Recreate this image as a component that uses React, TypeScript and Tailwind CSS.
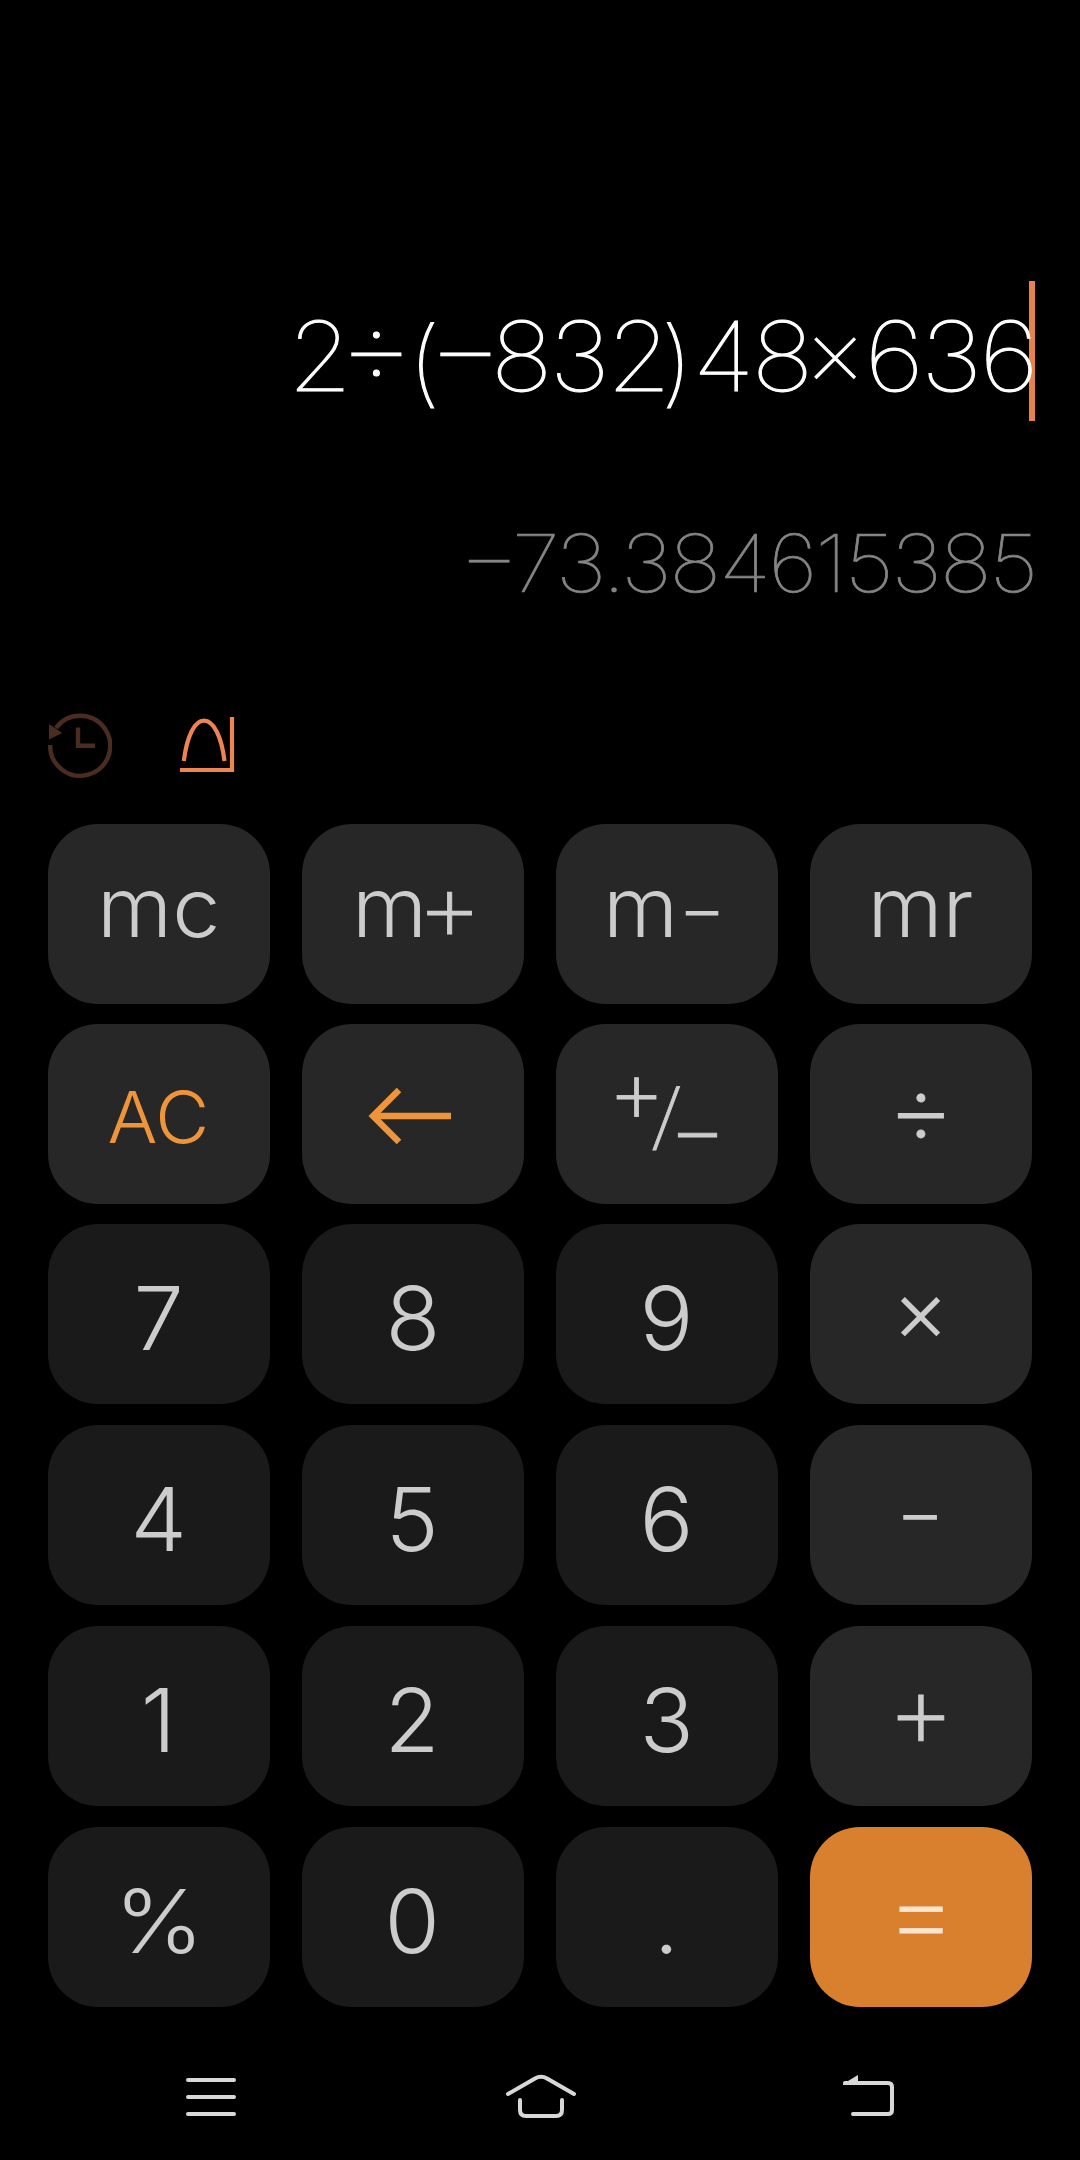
import React from 'react'
import clsx from 'clsx'

interface KeyItem {
    id: string;
    label: React.ReactNode;
    tone: 'digit' | 'operator' | 'accent';
    textClass: string;
}

const digitText = 'pt-[7px] pr-px text-[88px] font-light scale-x-[1.02]';
const memoryText = 'pb-3 text-[82px] font-light scale-x-[1.05]';
const mathText = 'pb-3 text-[106px] font-extralight [-webkit-text-stroke:0.8px_currentColor]';

const ArrowIcon = () => (
    <svg width="84" height="58" viewBox="0 0 84 58" fill="none" stroke="#ee943a" strokeWidth="6.400">
        <path d="M83 29H4" />
        <path d="M31 3L5 29L31 55" />
    </svg>
)

const MemoryPlus = () => (
    <span className="flex items-center">
        m<span className="-ml-2.5 -mr-2 pb-[5px] text-[97px] font-extralight leading-[82px] [-webkit-text-stroke:0.8px_currentColor]">+</span>
    </span>
)

const MemoryMinus = () => (
    <span className="flex items-center">
        m<span className="mr-1 text-[70px] leading-[82px]">−</span>
    </span>
)

const PlusMinus = () => (
    <span className="flex items-center text-[90px] font-extralight [-webkit-text-stroke:0.8px_currentColor]">
        <span className="mb-[46px] flex w-[41px] justify-center">+</span>
        <span className="-ml-1 mt-0.5 flex w-[27px] -skew-x-6 justify-center text-[73px]">/</span>
        <span className="-ml-[3px] mt-[29px] flex w-[41px] justify-center">−</span>
    </span>
)

const keys: KeyItem[] = [
    { id: 'mc', label: 'mc', tone: 'operator', textClass: memoryText },
    { id: 'm-plus', label: <MemoryPlus />, tone: 'operator', textClass: memoryText },
    { id: 'm-minus', label: <MemoryMinus />, tone: 'operator', textClass: memoryText },
    { id: 'mr', label: 'mr', tone: 'operator', textClass: memoryText },
    { id: 'clear', label: 'AC', tone: 'operator', textClass: 'pt-1.5 pr-0.5 text-[72px] font-light text-[#ee943a] scale-x-[1.03]' },
    { id: 'back', label: <ArrowIcon />, tone: 'operator', textClass: 'pr-1.5 pt-[3px]' },
    { id: 'sign', label: <PlusMinus />, tone: 'operator', textClass: '' },
    { id: 'divide', label: '÷', tone: 'operator', textClass: mathText },
    { id: '7', label: '7', tone: 'digit', textClass: digitText },
    { id: '8', label: '8', tone: 'digit', textClass: digitText },
    { id: '9', label: '9', tone: 'digit', textClass: digitText },
    { id: 'multiply', label: '×', tone: 'operator', textClass: 'pb-2 pr-px text-[88px] font-light' },
    { id: '4', label: '4', tone: 'digit', textClass: digitText },
    { id: '5', label: '5', tone: 'digit', textClass: digitText },
    { id: '6', label: '6', tone: 'digit', textClass: digitText },
    { id: 'subtract', label: '−', tone: 'operator', textClass: 'pb-2 pr-0.5 text-[76px] font-light' },
    { id: '1', label: '1', tone: 'digit', textClass: digitText },
    { id: '2', label: '2', tone: 'digit', textClass: digitText },
    { id: '3', label: '3', tone: 'digit', textClass: digitText },
    { id: 'add', label: '+', tone: 'operator', textClass: mathText },
    { id: 'percent', label: '%', tone: 'digit', textClass: 'pt-[7px] text-[88px] font-light scale-x-[1.09]' },
    { id: '0', label: '0', tone: 'digit', textClass: digitText },
    { id: 'point', label: '.', tone: 'digit', textClass: digitText },
    { id: 'equals', label: '=', tone: 'accent', textClass: 'pb-3 text-[109px] font-extralight scale-x-[1.04] [-webkit-text-stroke:0.8px_currentColor]' },
];

// widths and gaps of the parts of the typed expression
const expression = [
    { text: '2', className: 'w-[46px] scale-x-[1.08] text-[96px]' },
    { text: '÷', className: 'ml-2 w-[51px] pb-5 text-[119px]' },
    { text: '(', className: 'ml-[14px] mr-0.5 w-4 scale-x-[1.15] pt-[11px] text-[94px]' },
    { text: '−', className: 'ml-1.5 w-[51px] pb-5 text-[119px]' },
    { text: '832', className: 'ml-2 w-[161px] scale-x-[1.08] text-[96px] tracking-[-0.03em]' },
    { text: ')', className: 'ml-[9px] w-4 scale-x-[1.15] pt-[11px] text-[94px]' },
    { text: '48', className: 'ml-4 w-[101px] scale-x-[1.08] text-[96px] tracking-[-0.03em]' },
    { text: '×', className: 'ml-3 w-[42px] pb-[11px] text-[97px]' },
    { text: '636', className: 'ml-[13px] w-[162px] scale-x-[1.1] text-[96px] tracking-[-0.03em]' },
];

const Display = () => (
    <div className="flex h-[690px] flex-col items-end pr-[45px] pt-[281px]">
        <div className="flex h-[140px] items-center border-r-[6px] border-[#e5834b]">
            <div className="-mr-0.5 flex h-[120px] items-center pt-[9px] font-thin leading-none text-white [-webkit-text-stroke:1px_currentColor]">
                {expression.map((part, idx) => (
                    <span key={idx} className={clsx('flex justify-center whitespace-nowrap', part.className)}>
                        {part.text}
                    </span>
                ))}
            </div>
        </div>
        <div className="mt-[101px] flex h-20 items-center gap-1.5 whitespace-nowrap pr-[3px] font-thin leading-none text-[#858585] [-webkit-text-stroke:0.7px_currentColor]">
            <span className="flex w-[42px] justify-center pb-[18px] text-[97px]">−</span>
            <span className="flex w-[516px] scale-x-[1.09] justify-center pt-px text-[80px] tracking-[-0.028em]">
                73.384615385
            </span>
        </div>
    </div>
)

const Toolbar = () => (
    <div className="flex h-[134px] items-start gap-[68px] pl-12 pt-[22px]">
        <svg width="64" height="68" viewBox="0 0 64 68" fill="none" stroke="#4a2d20" strokeWidth="4.400">
            <path d="M2.200 33A30 30 0 1 0 8 16" />
            <path d="M30 15.500V33.700H47" />
            <path d="M1 12L14.300 21L1 27.500Z" fill="#4a2d20" stroke="none" />
        </svg>
        <svg width="56" height="68" viewBox="0 0 56 68" fill="none" stroke="#ee8550" strokeWidth="4.200">
            <path d="M3.800 49C7 24 14.500 8.700 24 8.700S41.500 24 44.500 49" />
            <path d="M0 58H52V5" />
        </svg>
    </div>
)

const Keypad = () => (
    <div className="grid grid-cols-[222px_222px_222px_222px] grid-rows-[200px_200px_201px_201px_201px_180px] gap-x-8 px-12">
        {keys.map((key) => (
            <button
                key={key.id}
                type="button"
                className={clsx(
                    'flex h-[180px] items-center justify-center rounded-[50px] leading-none',
                    key.tone === 'digit' && 'bg-[#1a1a1a] text-[#cccccc]',
                    key.tone === 'operator' && 'bg-[#272727] text-[#cccccc]',
                    key.tone === 'accent' && 'bg-[#d8802d] text-[#fbe5cf]'
                )}
            >
                <span className={clsx('block leading-none', key.textClass)}>{key.label}</span>
            </button>
        ))}
    </div>
)

const NavBar = () => (
    <div className="flex h-[153px] items-start justify-between pl-[185px] pr-[184px] pt-[66px]">
        <svg width="52" height="46" viewBox="0 0 52 46" fill="none" stroke="#d8d8d8" strokeWidth="4" strokeLinecap="round">
            <path d="M3 7H49M3 24H49M3 41H49" />
        </svg>
        <svg className="ml-[3px]" width="72" height="46" viewBox="0 0 72 46" fill="none" stroke="#d8d8d8" strokeWidth="4" strokeLinecap="round">
            <path d="M3 21L30 5.500Q36 2 42 5.500L69 21" />
            <path d="M15 27V37Q15 43 21 43H51Q57 43 57 37V27" />
        </svg>
        <svg width="54" height="46" viewBox="0 0 54 46" fill="none" stroke="#d8d8d8" strokeWidth="4" strokeLinecap="round">
            <path d="M3 10H46Q50 10 50 14V37Q50 41 46 41H11" />
            <path d="M1 11L16 2V12H1Z" fill="#d8d8d8" stroke="none" />
        </svg>
    </div>
)

const App = () => {
    return (
        <div className="h-[2160px] w-[1080px] overflow-hidden bg-black font-['Inter',sans-serif]">
            <Display />
            <Toolbar />
            <Keypad />
            <NavBar />
        </div>
    )
}

export default App
